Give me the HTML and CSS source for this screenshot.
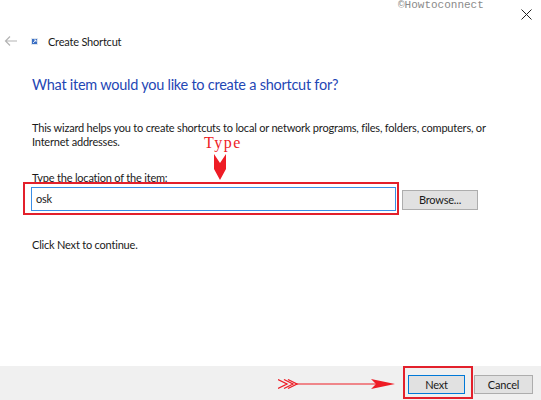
FILE: index.html
```html
<!DOCTYPE html>
<html>
<head>
<meta charset="utf-8">
<link rel="stylesheet" href="styles.css">
</head>
<body>
<div class="window">
  <div class="titlebar">
    <span class="watermark">©Howtoconnect</span>
    <svg class="close" width="11" height="11" viewBox="0 0 11 11"><path d="M0.5 0.5 L10.5 10.5 M10.5 0.5 L0.5 10.5" stroke="#222" stroke-width="1" fill="none"/></svg>
  </div>
  <div class="nav">
    <svg class="back" width="14" height="12" viewBox="0 0 14 12"><path d="M13 6 H1.5 M6 1.5 L1.5 6 L6 10.5" stroke="#b4b4b4" stroke-width="1.2" fill="none"/></svg>
    <svg class="appicon" width="7" height="7" viewBox="0 0 7 7"><rect x="0" y="0" width="7" height="7" fill="#dfe6ee"/><rect x="1" y="1" width="5" height="5" fill="#3b6fc4"/><path d="M2 5 L5 2 M3 2 H5 V4" stroke="#fff" stroke-width="0.8" fill="none"/></svg>
    <span class="title">Create Shortcut</span>
  </div>
  <main class="content">
    <h1 class="heading">What item would you like to create a shortcut for?</h1>
    <p class="intro">This wizard helps you to create shortcuts to local or network programs, files, folders, computers, or Internet addresses.</p>
    <div class="label">Type the location of the item:</div>
    <div class="row">
      <div class="redbox">
        <div class="input">osk</div>
      </div>
      <div class="btn browse">Browse...</div>
    </div>
    <p class="continue">Click Next to continue.</p>
    <div class="anno-type">
      <span class="type-word">Type</span>
      <svg width="12" height="26" viewBox="0 0 12 26"><polygon points="0,0 6,9 12,0 12,15 6,26 0,15" fill="#ee1c25"/></svg>
    </div>
  </main>
  <footer class="footer">
    <svg class="anno-arrow" width="118" height="12" viewBox="0 0 118 12"><path d="M0 1.5 L9 6 L0 10.5 M6 1.5 L15 6 L6 10.5 M10 1.5 L19 6 L10 10.5" stroke="#ee1c25" stroke-width="1.3" fill="none"/><path d="M17 6 H100" stroke="#ee1c25" stroke-width="1.2"/><polygon points="93,1 117,6 93,11 98,6" fill="#ee1c25"/></svg>
    <div class="redbox-next">
      <div class="btn next">Next</div>
    </div>
    <div class="btn cancel">Cancel</div>
  </footer>
</div>
</body>
</html>
```

FILE: styles.css
```css
* { box-sizing: border-box; }
html, body { margin: 0; padding: 0; background: #fff; }
body { font-family: Lato, "Noto Sans", sans-serif; font-size: 11px; letter-spacing: -0.2px; color: #1a1a1a; }

.window {
  width: 541px;
  height: 400px;
  display: flex;
  flex-direction: column;
  position: relative;
  overflow: hidden;
  background: #fff;
}

.titlebar {
  height: 26px;
  display: flex;
  justify-content: flex-end;
  align-items: center;
  padding-right: 9px;
  position: relative;
}
.watermark {
  position: absolute;
  left: 398px;
  top: 0;
  font-family: "Liberation Mono", monospace;
  font-size: 11px;
  line-height: 11px;
  letter-spacing: 0;
  color: #8a8a8a;
}
.close { display: block; margin-top: 2px; }

.nav {
  height: 30px;
  display: flex;
  align-items: center;
  padding-left: 4px;
}
.back { display: block; }
.appicon { display: block; margin-left: 13px; margin-top: 1px; }
.title { margin-left: 10px; color: #1a1a1a; }

.content {
  flex: 1;
  padding: 0 32px;
  position: relative;
}
.heading {
  margin: 19px 0 0;
  font-size: 14.5px;
  letter-spacing: -0.25px;
  line-height: 20px;
  font-weight: normal;
  color: #1f47b5;
}
.intro {
  margin: 26px 0 0;
  line-height: 14px;
  width: 470px;
}
.label {
  margin-top: 23px;
  line-height: 12px;
}
.row {
  display: flex;
  align-items: flex-start;
  margin-top: -2px;
}
.redbox {
  margin-left: -9px;
  width: 376px;
  height: 33px;
  border: 2px solid #e3202b;
  padding: 3px 1px 2px 6px;
}
.input {
  height: 24px;
  border: 1px solid #3a8ee6;
  padding-left: 4px;
  line-height: 21px;
}
.btn {
  background: #e1e1e1;
  border: 1px solid #adadad;
  text-align: center;
  color: #1a1a1a;
}
.browse {
  margin-left: 3px;
  margin-top: 8px;
  width: 76px;
  height: 20px;
  line-height: 18px;
}
.continue {
  margin: 23px 0 0;
  line-height: 14px;
}

.anno-type {
  position: absolute;
  left: 204px;
  top: 78px;
  display: flex;
  flex-direction: column;
  align-items: center;
}
.type-word {
  font-family: "Liberation Serif", serif;
  font-size: 16px;
  line-height: 18px;
  letter-spacing: 1.5px;
  color: #ee1c25;
}
.anno-type svg { display: block; margin-top: 2px; margin-left: -6px; }

.footer {
  height: 34px;
  background: #f0f0f0;
  display: flex;
  justify-content: flex-end;
  align-items: flex-start;
  padding-right: 8px;
  position: relative;
}
.anno-arrow {
  position: absolute;
  left: 278px;
  top: 12px;
}
.redbox-next {
  width: 70px;
  height: 33px;
  border: 2px solid #e3202b;
  padding: 7px 0 0 3px;
}
.next {
  width: 57px;
  height: 19px;
  line-height: 17px;
  border-color: #0078d7;
}
.cancel {
  margin-left: 1px;
  margin-top: 9px;
  width: 59px;
  height: 19px;
  line-height: 17px;
}
```
